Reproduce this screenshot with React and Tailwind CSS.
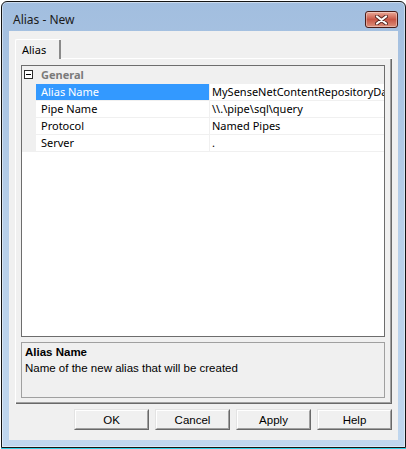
import React from "react";

const ROWS = [
  { name: "Alias Name", value: "MySenseNetContentRepositoryDatabase", selected: true },
  { name: "Pipe Name", value: "\\\\.\\pipe\\sql\\query" },
  { name: "Protocol", value: "Named Pipes" },
  { name: "Server", value: "." },
];

const uiFont = { fontFamily: '"Noto Sans", "Open Sans", sans-serif' };
const classicFont = { fontFamily: '"Liberation Sans", Arial, sans-serif' };

function CloseButton() {
  return (
    <div className="mt-[9px] flex h-[17px] w-[33px] items-center justify-center rounded-[3px] border border-[#4a1c18] bg-linear-to-b from-[#eaa999] via-[#c85646] to-[#dc8f7b] shadow-[inset_0_0_0_1px_rgba(255,255,255,0.35)]">
      <svg width="13" height="10" viewBox="0 0 13 10">
        <path d="M2 1.5 L11 8.5 M11 1.5 L2 8.5" stroke="#5a2a24" strokeWidth="4" strokeLinecap="round" />
        <path d="M2 1.5 L11 8.5 M11 1.5 L2 8.5" stroke="#ffffff" strokeWidth="2.2" strokeLinecap="round" />
      </svg>
    </div>
  );
}

function ClassicButton({ children }) {
  return (
    <div className="h-[21px] w-[75px] border border-t-[#e3e3e3] border-l-[#e3e3e3] border-r-[#696969] border-b-[#696969] bg-[#f0f0f0]">
      <div
        className="flex h-full w-full items-center justify-center border border-t-white border-l-white border-r-[#a0a0a0] border-b-[#a0a0a0] pt-[2px] text-[11.5px] leading-[13px] text-black"
        style={classicFont}
      >
        {children}
      </div>
    </div>
  );
}

function PropertyGrid() {
  return (
    <div className="h-[272px] overflow-hidden border border-[#6d6d6d] bg-white text-[11px] leading-[16px]" style={uiFont}>
      <div className="flex h-[18px] items-start bg-[#f0f0f0]">
        <div className="ml-[2px] mt-[4px] flex h-[9px] w-[9px] items-center justify-center border border-[#2b2b2b] bg-white">
          <div className="h-px w-[5px] bg-black" />
        </div>
        <span className="ml-[8px] pt-px font-bold text-[#7a7a7a]">General</span>
      </div>
      {ROWS.map((row) => (
        <div key={row.name} className="flex h-[17px] bg-[#f0f0f0]">
          <div className="w-[14px] shrink-0" />
          <div className="flex flex-1 border-b border-[#f0f0f0] bg-white">
            <div
              className={`w-[173px] shrink-0 whitespace-nowrap pl-[5px] ${
                row.selected ? "bg-[#3399ff] text-white" : "text-black"
              }`}
            >
              {row.name}
            </div>
            <div className="w-px shrink-0 bg-[#f0f0f0]" />
            <div className="flex-1 overflow-hidden whitespace-nowrap pl-[2px] text-black">{row.value}</div>
          </div>
        </div>
      ))}
    </div>
  );
}

export default function App() {
  return (
    <div className="relative h-[449px] w-[406px] overflow-hidden bg-white">
      <div className="ml-px mt-px h-[447px] w-[405px] rounded-t-[6px] border border-[#141414] bg-linear-to-b from-[#a2bedf] via-[#b7cfe9] to-[#bfd6ee] shadow-[inset_0_0_0_1px_rgba(255,255,255,0.45)]">
        <div className="flex h-[29px] items-start justify-between pl-[11px] pr-[7px]">
          <span className="mt-[10px] text-[12px] leading-[16px] text-[#1b1b1b]" style={uiFont}>
            Alias - New
          </span>
          <CloseButton />
        </div>

        <div className="mx-[7px] flex h-[409px] flex-col bg-[#f0f0f0]">
          <div className="flex h-[27px] items-start pl-[6px]">
            <div className="relative z-10 mt-[8px] h-[20px] w-[46px] rounded-t-[2px] border-l border-t border-white bg-[#f0f0f0]">
              <div className="flex h-full items-center border-r-2 border-[#8a8a8a] pl-[6px] text-[11px] leading-[14px] text-black" style={uiFont}>
                Alias
              </div>
            </div>
          </div>

          <div className="ml-[6px] h-[346px] w-[377px] border-l border-t border-white">
            <div className="h-full border-b border-r border-[#696969]">
              <div className="flex h-full flex-col border-b border-r border-[#a0a0a0] pl-[5px] pr-[5px] pt-[6px]">
                <PropertyGrid />
                <div className="mt-[5px] h-[56px] border border-[#a0a0a0] bg-[#f0f0f0] pl-[3px] pt-[2px] text-[11.5px] leading-[14px] text-black" style={classicFont}>
                  <div className="font-bold">Alias Name</div>
                  <div className="mt-[2px]">Name of the new alias that will be created</div>
                </div>
              </div>
            </div>
          </div>

          <div className="mr-[6px] mt-[5px] flex justify-end gap-[6px]">
            <ClassicButton>OK</ClassicButton>
            <ClassicButton>Cancel</ClassicButton>
            <ClassicButton>Apply</ClassicButton>
            <ClassicButton>Help</ClassicButton>
          </div>
        </div>
      </div>
      <div className="ml-px h-px w-[405px] bg-[#2fd0e6]" />
    </div>
  );
}
